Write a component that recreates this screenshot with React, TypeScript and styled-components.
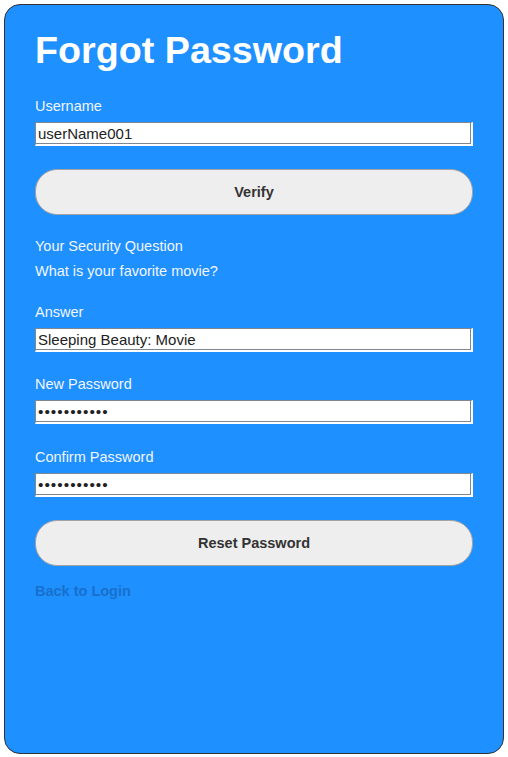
import React from "react";
import styled, { createGlobalStyle } from "styled-components";

const GlobalStyle = createGlobalStyle`
  html, body {
    margin: 0;
    padding: 0;
    background: #ffffff;
    font-family: "Liberation Sans", Arial, sans-serif;
  }
`;

const Page = styled.div`
  padding: 4px;
`;

const Card = styled.div`
  box-sizing: border-box;
  height: 750px;
  background-color: #1e90ff;
  border: 1px solid #333333;
  border-radius: 16px;
  padding: 23px 30px 0 30px;
  display: flex;
  flex-direction: column;
`;

const Title = styled.h1`
  margin: 0 0 25px 0;
  font-size: 37.7px;
  line-height: 44px;
  font-weight: bold;
  color: #ffffff;
`;

const Field = styled.div<{ $gap?: number }>`
  display: flex;
  flex-direction: column;
  gap: 7px;
  margin-bottom: ${(p) => p.$gap ?? 23}px;
`;

const Label = styled.span`
  font-size: 14.5px;
  line-height: 18px;
  color: #f2f6ff;
`;

const Input = styled.input`
  box-sizing: border-box;
  width: 100%;
  height: 24px;
  margin: 0;
  padding: 0 2px;
  font-family: "Liberation Sans", Arial, sans-serif;
  font-size: 15px;
  color: #222222;
  background: #ffffff;
  border-style: solid;
  border-width: 1px 2px 2px 1px;
  border-color: #7d8893 #ffffff #ffffff #7d8893;
  box-shadow: inset -1px -1px 0 #7d8893;
  outline: none;

  &[type="password"] {
    letter-spacing: 1px;
    font-size: 15.5px;
  }
`;

const Button = styled.button<{ $after: number }>`
  box-sizing: border-box;
  width: 100%;
  height: 46px;
  margin: 0 0 ${(p) => p.$after}px 0;
  border: 1px solid #a3a3a3;
  border-radius: 22px;
  background: #eeeeee;
  color: #333333;
  font-family: "Liberation Sans", Arial, sans-serif;
  font-size: 14.5px;
  font-weight: bold;
  cursor: pointer;
`;

const Question = styled.div`
  display: flex;
  flex-direction: column;
  gap: 7px;
  margin-bottom: 23px;
`;

const BackLink = styled.a`
  font-size: 14.5px;
  line-height: 18px;
  font-weight: bold;
  color: #1870cc;
  text-decoration: none;
  cursor: pointer;
`;

export default function App() {
  return (
    <>
      <GlobalStyle />
      <Page>
        <Card>
          <Title>Forgot Password</Title>
          <Field>
            <Label>Username</Label>
            <Input type="text" defaultValue="userName001" />
          </Field>
          <Button $after={22}>Verify</Button>
          <Question>
            <Label>Your Security Question</Label>
            <Label>What is your favorite movie?</Label>
          </Question>
          <Field $gap={23}>
            <Label>Answer</Label>
            <Input type="text" defaultValue="Sleeping Beauty: Movie" />
          </Field>
          <Field $gap={24}>
            <Label>New Password</Label>
            <Input type="password" defaultValue="password123" />
          </Field>
          <Field>
            <Label>Confirm Password</Label>
            <Input type="password" defaultValue="password123" />
          </Field>
          <Button $after={16}>Reset Password</Button>
          <div>
            <BackLink>Back to Login</BackLink>
          </div>
        </Card>
      </Page>
    </>
  );
}
